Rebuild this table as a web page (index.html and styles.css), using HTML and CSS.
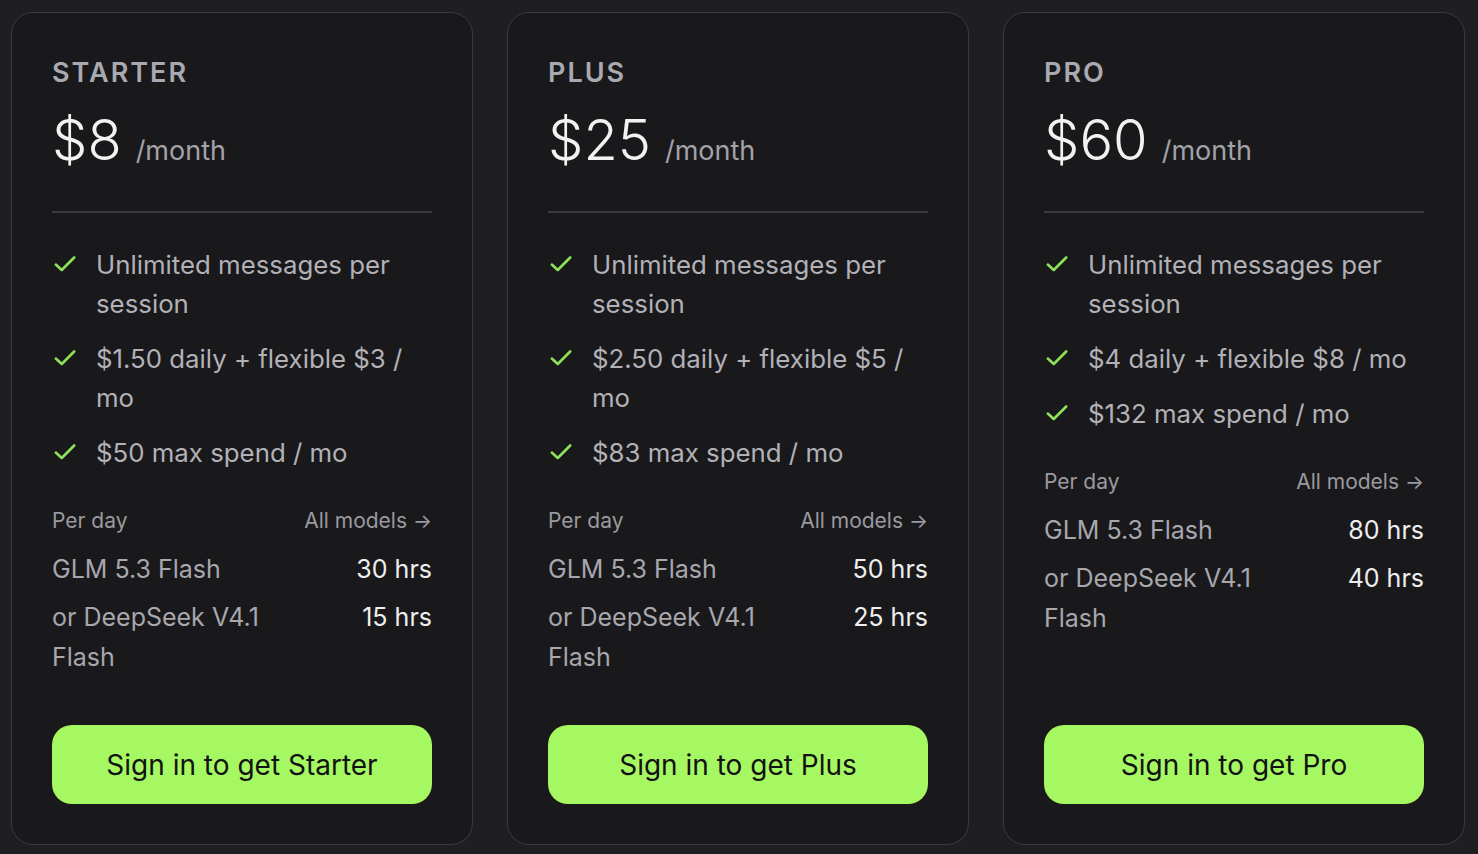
FILE: index.html
```html
<!DOCTYPE html>
<html lang="en">
<head>
<meta charset="utf-8">
<title>Pricing</title>
<link rel="stylesheet" href="styles.css">
</head>
<body>
<main class="plans">
  <section class="card">
    <h2 class="tier">STARTER</h2>
    <div class="price"><span class="amount">$8</span><span class="per">/month</span></div>
    <hr class="divider">
    <ul class="features">
      <li><svg class="check" viewBox="0 0 24 24"><path d="M3.5 12.5l5.5 5L20.5 6"/></svg><span>Unlimited messages per session</span></li>
      <li><svg class="check" viewBox="0 0 24 24"><path d="M3.5 12.5l5.5 5L20.5 6"/></svg><span>$1.50 daily + flexible $3 / mo</span></li>
      <li><svg class="check" viewBox="0 0 24 24"><path d="M3.5 12.5l5.5 5L20.5 6"/></svg><span>$50 max spend / mo</span></li>
    </ul>
    <div class="usage">
      <div class="usage-head"><span>Per day</span><a class="models">All models <span class="arrow">→</span></a></div>
      <div class="usage-row"><span class="model">GLM 5.3 Flash</span><span class="hrs">30 hrs</span></div>
      <div class="usage-row"><span class="model">or DeepSeek V4.1 Flash</span><span class="hrs">15 hrs</span></div>
    </div>
    <button class="cta">Sign in to get Starter</button>
  </section>
  <section class="card">
    <h2 class="tier">PLUS</h2>
    <div class="price"><span class="amount">$25</span><span class="per">/month</span></div>
    <hr class="divider">
    <ul class="features">
      <li><svg class="check" viewBox="0 0 24 24"><path d="M3.5 12.5l5.5 5L20.5 6"/></svg><span>Unlimited messages per session</span></li>
      <li><svg class="check" viewBox="0 0 24 24"><path d="M3.5 12.5l5.5 5L20.5 6"/></svg><span>$2.50 daily + flexible $5 / mo</span></li>
      <li><svg class="check" viewBox="0 0 24 24"><path d="M3.5 12.5l5.5 5L20.5 6"/></svg><span>$83 max spend / mo</span></li>
    </ul>
    <div class="usage">
      <div class="usage-head"><span>Per day</span><a class="models">All models <span class="arrow">→</span></a></div>
      <div class="usage-row"><span class="model">GLM 5.3 Flash</span><span class="hrs">50 hrs</span></div>
      <div class="usage-row"><span class="model">or DeepSeek V4.1 Flash</span><span class="hrs">25 hrs</span></div>
    </div>
    <button class="cta">Sign in to get Plus</button>
  </section>
  <section class="card">
    <h2 class="tier">PRO</h2>
    <div class="price"><span class="amount">$60</span><span class="per">/month</span></div>
    <hr class="divider">
    <ul class="features">
      <li><svg class="check" viewBox="0 0 24 24"><path d="M3.5 12.5l5.5 5L20.5 6"/></svg><span>Unlimited messages per session</span></li>
      <li><svg class="check" viewBox="0 0 24 24"><path d="M3.5 12.5l5.5 5L20.5 6"/></svg><span>$4 daily + flexible $8 / mo</span></li>
      <li><svg class="check" viewBox="0 0 24 24"><path d="M3.5 12.5l5.5 5L20.5 6"/></svg><span>$132 max spend / mo</span></li>
    </ul>
    <div class="usage">
      <div class="usage-head"><span>Per day</span><a class="models">All models <span class="arrow">→</span></a></div>
      <div class="usage-row"><span class="model">GLM 5.3 Flash</span><span class="hrs">80 hrs</span></div>
      <div class="usage-row"><span class="model">or DeepSeek V4.1 Flash</span><span class="hrs">40 hrs</span></div>
    </div>
    <button class="cta">Sign in to get Pro</button>
  </section>
</main>
</body>
</html>
```

FILE: styles.css
```css
* { box-sizing: border-box; }
html, body { margin: 0; height: 100%; }
body {
  background: #1f1f21;
  font-family: Inter, "Noto Sans", sans-serif;
  color: #e8e8ea;
  overflow: hidden;
}
.plans {
  display: flex;
  gap: 34px;
  padding: 12px 14px 9px 11px;
  height: 854px;
}
.card {
  width: 462px;
  flex: none;
  display: flex;
  flex-direction: column;
  background: #19191b;
  border: 1px solid #3b3b3e;
  border-radius: 22px;
  padding: 44px 40px 40px;
}
.tier {
  margin: 0;
  font-size: 27px;
  line-height: 32px;
  font-weight: 600;
  letter-spacing: 2px;
  color: #a9a9b1;
}
.price {
  display: flex;
  align-items: baseline;
  gap: 14px;
  margin-top: 21px;
  line-height: 60px;
}
.amount {
  font-size: 56px;
  font-weight: 300;
  color: #f2f2f3;
}
.per {
  font-size: 27px;
  color: #a2a2a8;
}
.divider {
  border: 0;
  border-top: 2px solid #3a3a3d;
  margin: 30px 0 0;
}
.features {
  list-style: none;
  margin: 32px 0 0;
  padding: 0;
  display: flex;
  flex-direction: column;
  gap: 16px;
}
.features li {
  display: flex;
  gap: 18px;
  font-size: 25.8px;
  line-height: 39px;
  color: #b1b1b7;
}
.features li span { flex: 1; }
.check {
  width: 26px;
  height: 26px;
  flex: none;
  margin-top: 6px;
  fill: none;
  stroke: #8ee25a;
  stroke-width: 2.4;
  stroke-linecap: round;
  stroke-linejoin: round;
}
.usage {
  margin-top: 33px;
  display: flex;
  flex-direction: column;
  gap: 8px;
}
.usage-head {
  display: flex;
  justify-content: space-between;
  font-size: 21px;
  line-height: 32px;
  color: #9a9aa0;
  margin-bottom: 4px;
}
.models { color: #9a9aa0; }
.arrow { font-size: 20px; }
.usage-row {
  display: flex;
  justify-content: space-between;
  gap: 48px;
  font-size: 25px;
  line-height: 40px;
}
.model { color: #a7a7ad; }
.hrs { color: #eeeeef; white-space: nowrap; }
.cta {
  margin-top: auto;
  height: 79px;
  border: 0;
  border-radius: 20px;
  background: #a6f863;
  color: #121212;
  font-family: Inter, "Noto Sans", sans-serif;
  font-size: 28px;
  font-weight: 400;
  cursor: pointer;
}
```
